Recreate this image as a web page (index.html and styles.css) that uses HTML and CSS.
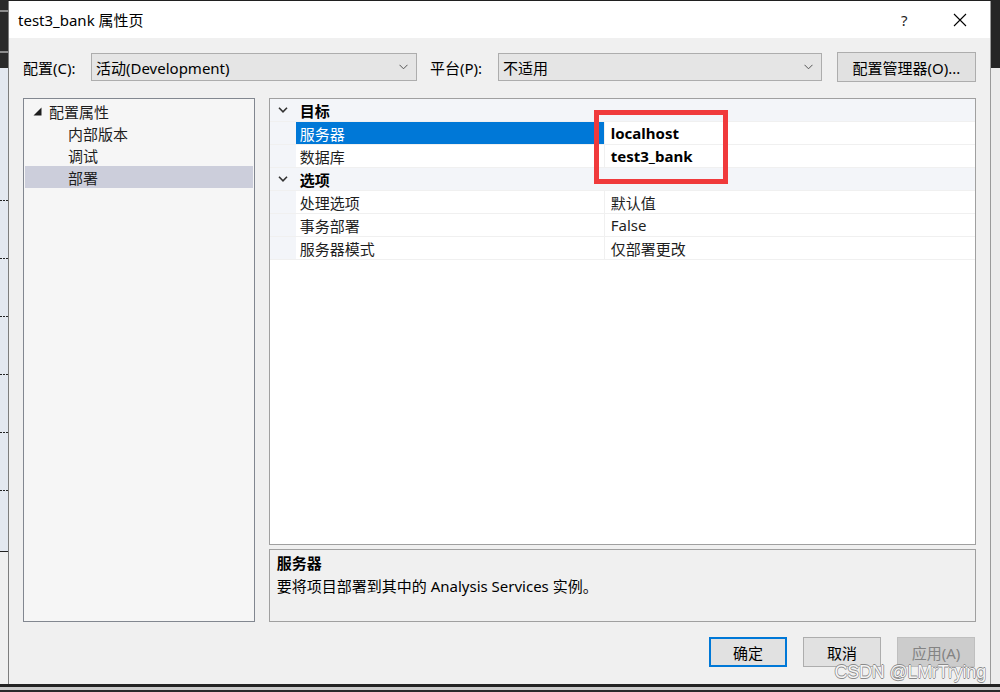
FILE: index.html
```html
<!DOCTYPE html>
<html lang="zh-CN">
<head>
    <meta charset="UTF-8">
    <title>test3_bank 属性页</title>
    <link rel="stylesheet" href="styles.css">
</head>
<body>
    <div class="desktop">
        <div class="side-left">
            <div class="side-top"></div>
            <div class="side-chart">
                <span class="dash"></span>
                <span class="dash"></span>
                <span class="dash"></span>
                <span class="dash"></span>
                <span class="dash"></span>
                <span class="dash"></span>
            </div>
            <div class="side-bottom"></div>
        </div>

        <div class="dialog">
            <div class="title-bar">
                <span class="title">test3_bank 属性页</span>
                <span class="title-help">?</span>
                <svg class="title-close" width="14" height="14" viewBox="0 0 14 14">
                    <path d="M1 1 L13 13 M13 1 L1 13" stroke="#000" stroke-width="1.1" fill="none"/>
                </svg>
            </div>

            <div class="content">
                <div class="toolbar">
                    <span class="tool-label">配置(C):</span>
                    <div class="combo combo-config">
                        <span>活动(Development)</span>
                        <svg width="9" height="6" viewBox="0 0 9 6"><path d="M0.5 0.8 L4.5 4.8 L8.5 0.8" stroke="#555" fill="none"/></svg>
                    </div>
                    <span class="tool-label label-platform">平台(P):</span>
                    <div class="combo combo-platform">
                        <span>不适用</span>
                        <svg width="9" height="6" viewBox="0 0 9 6"><path d="M0.5 0.8 L4.5 4.8 L8.5 0.8" stroke="#555" fill="none"/></svg>
                    </div>
                    <div class="btn btn-manager">配置管理器(O)...</div>
                </div>

                <div class="main">
                    <div class="tree">
                        <div class="tree-row tree-root">
                            <svg class="tree-arrow" width="9" height="9" viewBox="0 0 9 9"><polygon points="8.5,0.5 8.5,8.5 0.5,8.5" fill="#1e1e1e"/></svg>
                            <span>配置属性</span>
                        </div>
                        <div class="tree-row tree-child">内部版本</div>
                        <div class="tree-row tree-child">调试</div>
                        <div class="tree-row tree-child selected">部署</div>
                    </div>

                    <div class="right-col">
                        <div class="grid">
                            <div class="grid-row category">
                                <div class="gutter"><svg width="10" height="6" viewBox="0 0 10 6"><path d="M1 0.8 L5 4.8 L9 0.8" stroke="#333" stroke-width="1.6" fill="none"/></svg></div>
                                <div class="cell-name">目标</div>
                            </div>
                            <div class="grid-row">
                                <div class="gutter"></div>
                                <div class="cell-name active">服务器</div>
                                <div class="cell-value strong">localhost</div>
                            </div>
                            <div class="grid-row">
                                <div class="gutter"></div>
                                <div class="cell-name">数据库</div>
                                <div class="cell-value strong">test3_bank</div>
                            </div>
                            <div class="grid-row category">
                                <div class="gutter"><svg width="10" height="6" viewBox="0 0 10 6"><path d="M1 0.8 L5 4.8 L9 0.8" stroke="#333" stroke-width="1.6" fill="none"/></svg></div>
                                <div class="cell-name">选项</div>
                            </div>
                            <div class="grid-row">
                                <div class="gutter"></div>
                                <div class="cell-name">处理选项</div>
                                <div class="cell-value">默认值</div>
                            </div>
                            <div class="grid-row">
                                <div class="gutter"></div>
                                <div class="cell-name">事务部署</div>
                                <div class="cell-value">False</div>
                            </div>
                            <div class="grid-row">
                                <div class="gutter"></div>
                                <div class="cell-name">服务器模式</div>
                                <div class="cell-value">仅部署更改</div>
                            </div>
                            <div class="highlight-box"></div>
                        </div>

                        <div class="description">
                            <div class="desc-title">服务器</div>
                            <div class="desc-text">要将项目部署到其中的 Analysis Services 实例。</div>
                        </div>
                    </div>
                </div>

                <div class="actions">
                    <div class="btn btn-ok">确定</div>
                    <div class="btn">取消</div>
                    <div class="btn disabled">应用(A)</div>
                </div>
            </div>

            <div class="watermark">CSDN @LMrTrying</div>
        </div>

        <div class="side-right">
            <div class="side-top"></div>
            <div class="side-light"></div>
        </div>
    </div>
    <div class="taskbar"></div>
</body>
</html>
```

FILE: styles.css
```css
* {
    box-sizing: border-box;
}

body {
    margin: 0;
    width: 1000px;
    height: 692px;
    overflow: hidden;
    background: #202020;
    font-family: "Segoe UI", "Noto Sans", "Noto Sans CJK SC", sans-serif;
    font-size: 15px;
    color: #1e1e1e;
}

.desktop {
    display: flex;
    height: 684px;
    padding-top: 1px;
}

/* background windows peeking at the sides */
.side-left {
    width: 8px;
    display: flex;
    flex-direction: column;
    margin-top: -1px;
}

.side-top {
    height: 68px;
    background: #262626;
}

.side-left .side-top {
    background: linear-gradient(#2a2a2a 0 10px, #8c8c8c 10px 12px, #2a2a2a 12px 51px, #8c8c8c 51px 53px, #2a2a2a 53px);
}

.side-chart {
    height: 484px;
    background: #e3e8f0;
    border-bottom: 1px solid #222;
    padding-top: 132px;
    display: flex;
    flex-direction: column;
    gap: 57px;
}

.dash {
    display: block;
    height: 1px;
    width: 8px;
    background: repeating-linear-gradient(90deg, #222 0 2px, transparent 2px 3px);
}

.side-bottom {
    flex: 1;
    background: #f0f0f0;
}

.side-right {
    width: 9px;
    display: flex;
    flex-direction: column;
    margin-top: -1px;
}

.side-light {
    flex: 1;
    background: #ececec;
}

.taskbar {
    height: 8px;
    background: linear-gradient(#222 0 3px, #c9c9c9 3px 6px, #2a2a2a 6px);
}

/* dialog */
.dialog {
    position: relative;
    width: 983px;
    height: 683px;
    border-left: 1px solid #7d7d7d;
    border-right: 1px solid #9a9a9a;
    background: #f0f0f0;
    display: flex;
    flex-direction: column;
}

.title-bar {
    height: 37px;
    background: #fff;
    display: flex;
    align-items: center;
    padding-left: 9px;
}

.title {
    color: #000;
    flex: 1;
}

.title-help {
    width: 14px;
    margin-right: 38px;
}

.title-close {
    margin-right: 23px;
}

.content {
    flex: 1;
    display: flex;
    flex-direction: column;
    padding: 14px 14px 16px 14px;
}

.toolbar {
    height: 30px;
    display: flex;
    align-items: center;
}

.tool-label {
    width: 68px;
    color: #000;
}

.label-platform {
    margin-left: 13px;
}

.combo {
    height: 28px;
    display: flex;
    align-items: center;
    justify-content: space-between;
    padding: 0 8px 0 4px;
    background: #e5e5e5;
    border: 1px solid #adadad;
    color: #000;
}

.combo-config {
    width: 326px;
}

.combo-platform {
    width: 324px;
}

.btn {
    height: 30px;
    width: 78px;
    display: flex;
    align-items: center;
    justify-content: center;
    background: #e1e1e1;
    border: 1px solid #adadad;
    color: #000;
}

.btn-manager {
    width: 139px;
    margin-left: 15px;
}

.main {
    height: 524px;
    margin-top: 16px;
    display: flex;
    gap: 14px;
}

/* tree */
.tree {
    width: 232px;
    background: #f6f6f6;
    border: 1px solid #828790;
    padding: 1px;
}

.tree-row {
    height: 22px;
    display: flex;
    align-items: center;
}

.tree-root {
    padding-left: 8px;
}

.tree-arrow {
    margin-right: 7px;
}

.tree-child {
    padding-left: 43px;
}

.tree-row.selected {
    background: #cccedb;
}

/* property grid */
.right-col {
    width: 708px;
    display: flex;
    flex-direction: column;
    gap: 4px;
}

.grid {
    position: relative;
    height: 447px;
    background: #fff;
    border: 1px solid #a0a0a0;
}

.grid-row {
    height: 23px;
    display: flex;
    border-bottom: 1px solid #f0f0f0;
}

.gutter {
    width: 26px;
    background: #f3f5f9;
    display: flex;
    align-items: center;
    justify-content: center;
}

.cell-name {
    width: 308px;
    padding-left: 4px;
    display: flex;
    align-items: center;
}

.cell-name.active {
    background: #0078d7;
    color: #fff;
}

.cell-value {
    flex: 1;
    padding-left: 6px;
    display: flex;
    align-items: center;
    border-left: 1px solid #f0f0f0;
}

.cell-value.strong {
    font-weight: bold;
    color: #000;
}

.grid-row.category {
    background: #f3f5f9;
    font-weight: bold;
    color: #000;
}

.highlight-box {
    position: absolute;
    left: 324px;
    top: 11px;
    width: 134px;
    height: 74px;
    border: 5px solid #f03a3c;
}

.description {
    flex: 1;
    border: 1px solid #a0a0a0;
    background: #f0f0f0;
    padding: 2px 7px;
}

.desc-title {
    font-weight: bold;
    height: 23px;
    line-height: 23px;
    color: #000;
}

.desc-text {
    height: 23px;
    line-height: 23px;
    color: #000;
}

/* bottom buttons */
.actions {
    margin-top: 15px;
    padding-right: 1px;
    display: flex;
    justify-content: flex-end;
    gap: 16px;
}

.btn-ok {
    border: 2px solid #0078d7;
}

.btn.disabled {
    background: #cccccc;
    border-color: #bfbfbf;
    color: #838383;
}

.watermark {
    position: absolute;
    right: 4px;
    bottom: 1px;
    font-family: "Liberation Sans", Arial, sans-serif;
    font-size: 18px;
    color: #f4f4f4;
    text-shadow: 0.6px 0 0 #8a8a8a, -0.6px 0 0 #8a8a8a, 0 0.6px 0 #8a8a8a, 0 -0.6px 0 #8a8a8a;
    letter-spacing: -0.2px;
}
```
